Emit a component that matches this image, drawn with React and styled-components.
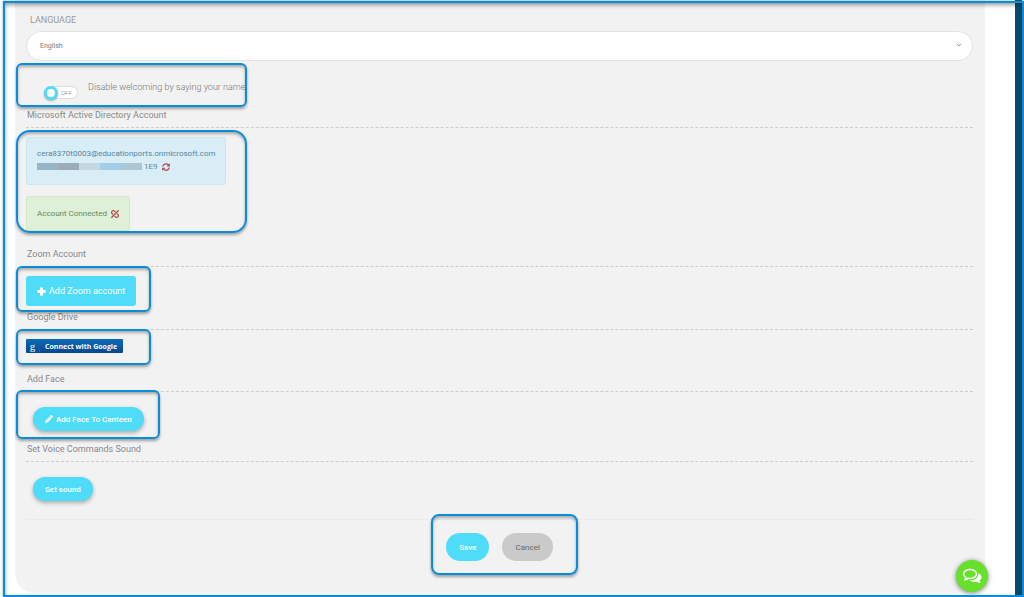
import { useState } from "react"
import styled, { createGlobalStyle } from "styled-components"
import { FaPencilAlt, FaSyncAlt, FaUnlink } from "react-icons/fa"
import { FiChevronDown } from "react-icons/fi"

const maskColors = ["#98b4c8", "#9cadb9", "#c5d8df", "#a6cde6", "#adc6d4"]

function ChatIcon(){
    return (
        <svg width="20" height="16" viewBox="0 0 40 32" fill="none">
            <path
                d="M33 10.500C37 12.500 39 15.500 39 18.500C39 21 37.500 23.300 35 25C35.500 27 36.500 28.500 38 30C34.500 30 31.500 29 29.500 27.300C24 28.300 18.500 27.300 15 24.800C25 25 33.500 19.500 33 10.500Z"
                fill="#fff"
            />
            <path
                d="M16 3C8.500 3 3 7 3 12C3 15 5 17.500 8 19.200C7.500 21 6.800 22 5.500 23.500C8.500 23.200 10.800 22.200 12.700 20.700C13.800 20.900 14.900 21 16 21C23.500 21 29 17 29 12C29 7 23.500 3 16 3Z"
                stroke="#fff"
                strokeWidth="3"
                strokeLinejoin="round"
            />
        </svg>
    )
}

function PlusIcon(){
    return (
        <svg width="9" height="9" viewBox="0 0 9 9">
            <path d="M3 0.500H6V3H8.500V6H6V8.500H3V6H0.500V3H3Z" fill="#fff"/>
        </svg>
    )
}

export default function App(){
    const [language, setLanguage] = useState("English")
    const [disabled, setDisabled] = useState(false)

    return (
        <Page>
            <GlobalStyle/>
            <Panel>
                <Label htmlFor="language">LANGUAGE</Label>
                <SelectBox>
                    <select id="language" value={language} onChange={(e)=> setLanguage(e.target.value)}>
                        <option>English</option>
                    </select>
                    <FiChevronDown/>
                </SelectBox>

                <WelcomeRow>
                    <Switch>
                        <input
                            id="welcome"
                            type="checkbox"
                            checked={disabled}
                            onChange={()=> setDisabled(!disabled)}
                        />
                        <span>{disabled ? "ON" : "OFF"}</span>
                    </Switch>
                    <label htmlFor="welcome">Disable welcoming by saying your name</label>
                </WelcomeRow>

                <Title>Microsoft Active Directory Account</Title>
                <AccountBody>
                    <Highlight $width="231px" $height="103px" $top="2px" $radius="14px"/>
                    <Alert $kind="info">
                        <p>cera8370t0003@educationports.onmicrosoft.com</p>
                        <p>
                            <Mask>{maskColors.map((color)=> <MaskBlock key={color} $color={color}/>)}</Mask>
                            1E9
                            <IconButton type="button" aria-label="Refresh"><FaSyncAlt/></IconButton>
                        </p>
                    </Alert>
                    <Alert $kind="success">
                        <p>
                            Account Connected
                            <IconButton type="button" aria-label="Disconnect" $flip><FaUnlink/></IconButton>
                        </p>
                    </Alert>
                </AccountBody>

                <Title>Zoom Account</Title>
                <Body $top="9px" $bottom="5px">
                    <Highlight $width="135px" $height="46px" $top="-1px"/>
                    <ZoomButton type="button"><PlusIcon/>Add Zoom account</ZoomButton>
                </Body>

                <Title>Google Drive</Title>
                <Body $top="9px" $bottom="20px">
                    <Highlight $width="135px" $height="36px" $top="-1px"/>
                    <GoogleButton type="button"><b>g</b><span>Connect with Google</span></GoogleButton>
                </Body>

                <Title>Add Face</Title>
                <Body $top="15px" $bottom="12px">
                    <Highlight $width="144px" $height="49px" $top="-2px"/>
                    <RoundButton type="button"><FaPencilAlt/>Add Face To Canteen</RoundButton>
                </Body>

                <Title>Set Voice Commands Sound</Title>
                <Body $top="15px" $bottom="18px">
                    <RoundButton type="button">Set sound</RoundButton>
                </Body>

                <Footer>
                    <Actions>
                        <ActionButton type="submit" $primary>Save</ActionButton>
                        <ActionButton type="button">Cancel</ActionButton>
                    </Actions>
                </Footer>
            </Panel>
            <Strip/>
            <ChatButton type="button" aria-label="Chat"><ChatIcon/></ChatButton>
            <Frame/>
        </Page>
    )
}

const GlobalStyle = createGlobalStyle`
    *{
        box-sizing: border-box;
    }
    body{
        margin: 0;
        background-color: white;
        font-family: Roboto, "Liberation Sans", sans-serif;
        color: #777777;
    }
    button, select{
        font-family: inherit;
        border: none;
        cursor: pointer;
    }
    p, h2{
        margin: 0;
    }
`

const Page = styled.div`
    display: flex;
    min-height: 100vh;
    padding: 0 2px 0 15px;
`

const Frame = styled.div`
    position: fixed;
    inset: 1px 0 0 3px;
    border: 2px solid #0a8cd8;
    box-shadow: 0 0 2px rgba(0,100,150,0.6), inset 0 2px 4px rgba(0,0,0,0.4);
    pointer-events: none;
    z-index: 5;
`

const Strip = styled.div`
    width: 7px;
    margin-left: 30px;
    background-color: #004f6e;
`

const Panel = styled.form`
    flex: 1;
    margin-bottom: 4px;
    padding: 14px 12px 0 11px;
    background-color: #f2f2f2;
    border-radius: 0 0 20px 20px;
`

const Label = styled.label`
    display: block;
    padding-left: 4px;
    font-size: 9px;
    line-height: 12px;
    color: #999999;
`

const SelectBox = styled.div`
    position: relative;
    margin-top: 5px;

    select{
        display: block;
        width: 100%;
        height: 30px;
        padding: 0 13px;
        appearance: none;
        border: 1px solid #e3e3e3;
        border-radius: 15px;
        background-color: white;
        font-size: 7px;
        color: #777777;
    }
    svg{
        position: absolute;
        right: 10px;
        top: 10px;
        width: 8px;
        height: 8px;
        stroke-width: 3px;
        color: #999999;
        pointer-events: none;
    }
`

const Highlight = styled.div`
    position: absolute;
    top: ${(p)=> p.$top};
    left: -10px;
    width: ${(p)=> p.$width};
    height: ${(p)=> p.$height};
    border: 2px solid #0a8cd8;
    border-radius: ${(p)=> p.$radius || "6px"};
    box-shadow: 0 2px 3px rgba(0,0,0,0.35), inset 0 2px 3px rgba(0,0,0,0.3);
    pointer-events: none;
    z-index: 2;
`

const WelcomeRow = styled.div`
    display: flex;
    width: 231px;
    height: 44px;
    margin: 2px 0 2px -10px;
    padding: 16px 0 0 26px;
    gap: 10px;
    border: 2px solid #0a8cd8;
    border-radius: 6px;
    box-shadow: 0 2px 3px rgba(0,0,0,0.35), inset 0 2px 3px rgba(0,0,0,0.3);
    font-size: 9px;
    line-height: 12px;
    font-weight: 300;
    color: #777777;
    white-space: nowrap;
`

const Switch = styled.div`
    display: flex;
    flex: none;
    align-items: center;
    position: relative;
    width: 34px;
    height: 13px;
    margin-top: 5px;
    border: 1px solid #dddddd;
    border-radius: 7px;
    background-color: white;

    input{
        position: absolute;
        left: -1px;
        width: 14px;
        height: 14px;
        margin: 0;
        appearance: none;
        border: 3px solid #4fdcf8;
        border-radius: 50%;
        background-color: white;
        box-shadow: 0 1px 2px rgba(0,0,0,0.3);
        cursor: pointer;
    }
    input:checked{
        left: 19px;
    }
    input:checked + span{
        padding-left: 5px;
    }
    span{
        padding-left: 16px;
        font-size: 6px;
        line-height: 8px;
    }
`

const Title = styled.h2`
    padding: 0 0 6px 1px;
    border-bottom: 1px dashed #cccccc;
    font-size: 9px;
    line-height: 12px;
    font-weight: 400;
    color: #888888;
`

const Body = styled.div`
    position: relative;
    display: flex;
    padding: ${(p)=> p.$top} 0 ${(p)=> p.$bottom};
`

const AccountBody = styled(Body)`
    flex-direction: column;
    align-items: flex-start;
    gap: 11px;
    padding: 9px 0 17px;
`

const Alert = styled.div`
    padding: ${(p)=> p.$kind === "info" ? "9px 10px 11px" : "10px"};
    border: 1px solid ${(p)=> p.$kind === "info" ? "#c8e8f0" : "#d6e9c6"};
    border-radius: 2px;
    background-color: ${(p)=> p.$kind === "info" ? "#d9edf7" : "#dff0d8"};
    color: ${(p)=> p.$kind === "info" ? "#5586a3" : "#5f8a61"};
    font-size: 8px;
    line-height: 13px;

    p{
        display: flex;
        align-items: center;
    }
`

const Mask = styled.span`
    display: flex;
    margin-right: 2px;
`

const MaskBlock = styled.span`
    width: 21px;
    height: 7px;
    background-color: ${(p)=> p.$color};
`

const IconButton = styled.button`
    display: flex;
    margin-left: 4px;
    padding: 0;
    background: none;
    font-size: 8px;
    color: #b8454a;

    svg{
        transform: ${(p)=> p.$flip ? "scaleX(-1)" : "none"};
    }
`

const ZoomButton = styled.button`
    display: flex;
    align-items: center;
    gap: 3px;
    height: 30px;
    padding: 0 11px;
    border-radius: 3px;
    background-color: #4fdcf8;
    font-size: 9px;
    color: white;
`

const GoogleButton = styled.button`
    display: flex;
    align-items: center;
    height: 14px;
    padding: 0 6px 0 0;
    border-radius: 1px;
    background-image: linear-gradient(#0a6bb8, #04478f);
    font-family: "Open Sans", sans-serif;
    font-size: 7px;
    font-weight: 700;
    color: white;

    b{
        width: 14px;
        margin-right: 5px;
        border-right: 1px solid #1b5796;
        font-family: "Liberation Serif", serif;
        font-size: 11px;
        line-height: 12px;
        font-weight: 400;
    }
`

const RoundButton = styled.button`
    display: flex;
    align-items: center;
    gap: 3px;
    height: 24px;
    margin-left: 7px;
    padding: 0 12px;
    border-radius: 12px;
    background-color: #4fdcf8;
    box-shadow: 0 2px 4px rgba(0,0,0,0.3);
    font-size: 8px;
    font-weight: 500;
    color: white;
`

const Footer = styled.div`
    display: flex;
    justify-content: center;
    padding: 13px 0 32px;
    border-top: 1px solid #ebebeb;
`

const Actions = styled.div`
    position: relative;
    display: flex;
    gap: 13px;

    &::after{
        content: "";
        position: absolute;
        inset: -19px -25px -14px -15px;
        border: 2px solid #0a8cd8;
        border-radius: 8px;
        box-shadow: 0 2px 3px rgba(0,0,0,0.35), inset 0 2px 3px rgba(0,0,0,0.3);
        pointer-events: none;
    }
`

const ActionButton = styled.button`
    height: 28px;
    padding: 0 13px;
    border-radius: 14px;
    background-color: ${(p)=> p.$primary ? "#4fdcf8" : "#cacaca"};
    font-size: 8px;
    font-weight: ${(p)=> p.$primary ? 500 : 400};
    color: ${(p)=> p.$primary ? "white" : "#666666"};
`

const ChatButton = styled.button`
    position: fixed;
    right: 36px;
    bottom: 5px;
    display: flex;
    align-items: center;
    justify-content: center;
    width: 32px;
    height: 32px;
    padding: 0;
    border-radius: 50%;
    background-color: #65e02b;
    box-shadow: 0 1px 5px rgba(0,0,0,0.5);
`
